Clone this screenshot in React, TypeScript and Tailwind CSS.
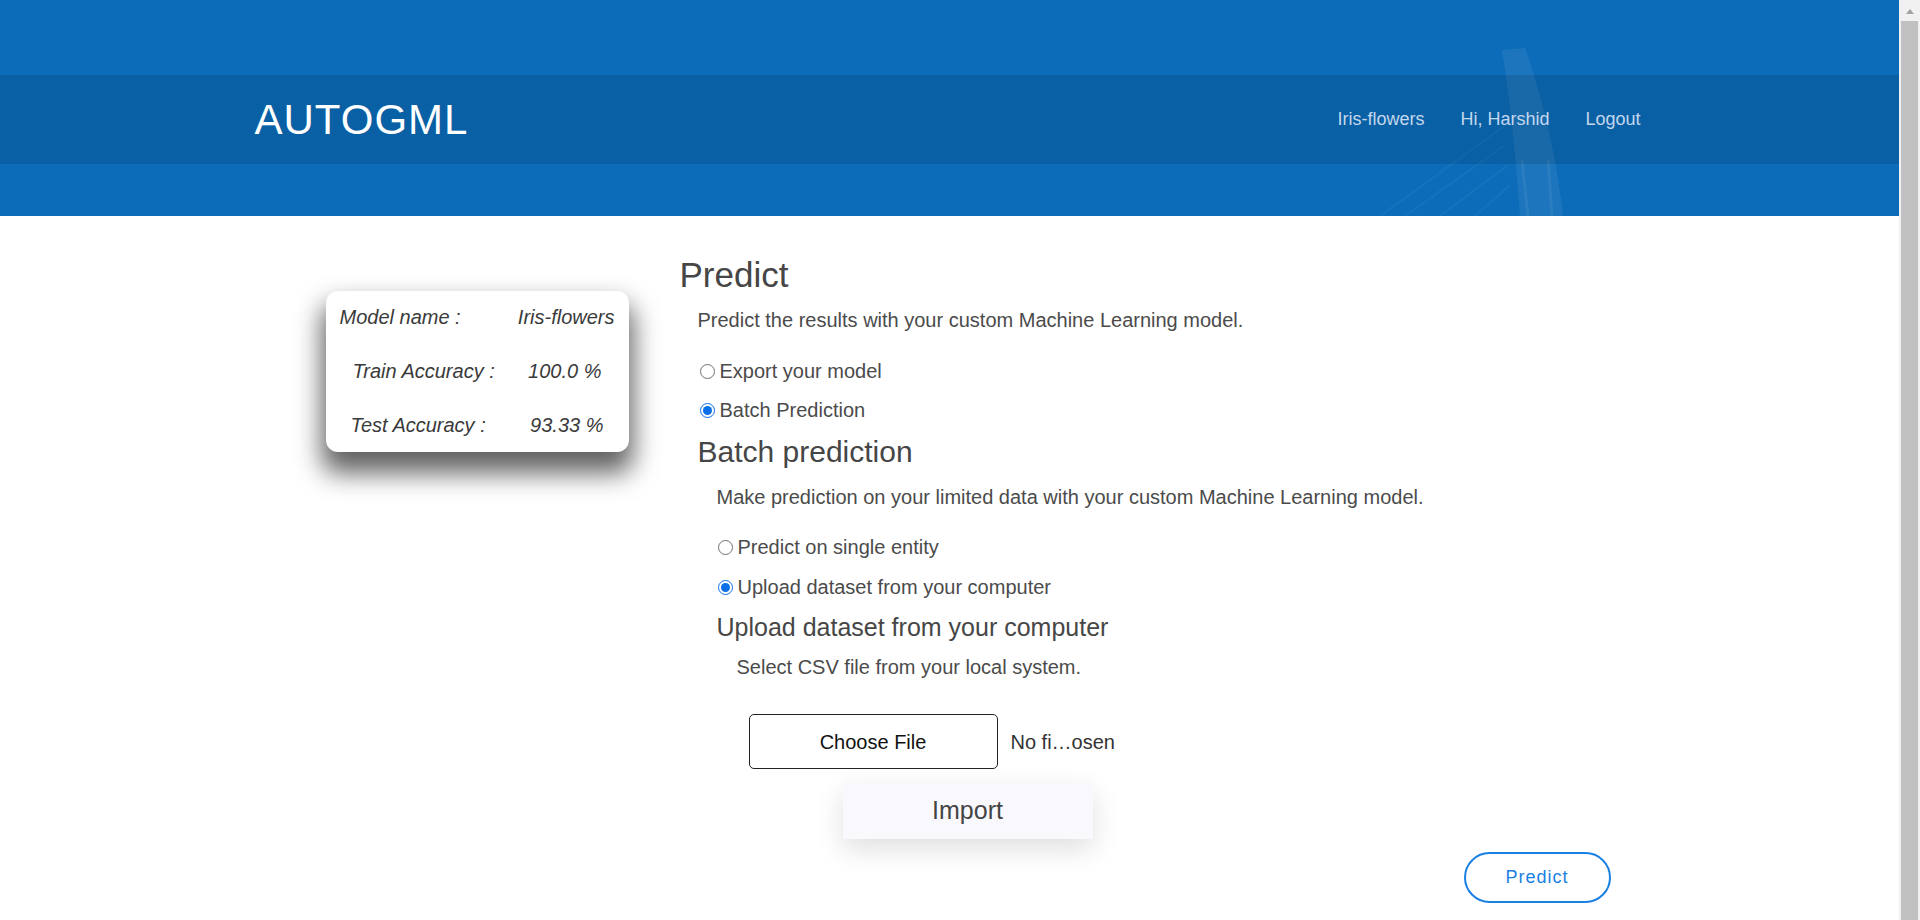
import React from "react";

function Radio({ checked }: { checked?: boolean }) {
  return checked ? (
    <span className="flex h-[15px] w-[15px] shrink-0 items-center justify-center rounded-full border-[1.5px] border-[#0b6fe8] bg-white">
      <span className="h-[9px] w-[9px] rounded-full bg-[#0b6fe8]" />
    </span>
  ) : (
    <span className="h-[15px] w-[15px] shrink-0 rounded-full border border-[#6f6f6f] bg-white" />
  );
}

function RadioRow({ checked, label, className }: { checked?: boolean; label: string; className: string }) {
  return (
    <div className={"flex items-center gap-[5px] text-[20px] leading-[30px] text-[#4b4b4b] " + className}>
      <Radio checked={checked} />
      <span>{label}</span>
    </div>
  );
}

export default function App() {
  return (
    <div className="flex h-[920px] w-full overflow-hidden bg-white font-['Liberation_Sans',Arial,sans-serif]">
      <div className="h-full flex-1 overflow-hidden">
        <header className="relative h-[216px] overflow-hidden bg-[#0c6cb9]">
          <svg className="absolute left-0 top-0" width="1899" height="216" viewBox="0 0 1899 216">
            <g fill="none" stroke="rgba(255,255,255,0.045)" strokeWidth="2">
              <path d="M1505 145 L1405 216" />
              <path d="M1508 165 L1440 216" />
              <path d="M1510 185 L1475 216" />
              <path d="M1506 125 L1380 216" />
            </g>
            <path d="M1502 50 L1525 48 C1540 90 1556 150 1563 216 L1520 216 C1516 160 1510 100 1502 50 Z" fill="rgba(255,255,255,0.07)" />
            <path d="M1522 160 L1528 216 M1548 160 L1552 216" stroke="rgba(255,255,255,0.06)" strokeWidth="3" />
          </svg>
          <div className="relative pt-[75px]">
            <div className="h-[89px] bg-[rgba(0,0,0,0.11)]">
              <div className="mx-auto flex h-full w-[1390px] items-center justify-between pr-[4px]">
                <div className="text-[42px] leading-none tracking-[1px] text-white">AUTOGML</div>
                <nav className="-mt-[2px] flex gap-[36px] text-[18px] leading-none text-[#c3d7ee]">
                  <span>Iris-flowers</span>
                  <span>Hi, Harshid</span>
                  <span>Logout</span>
                </nav>
              </div>
            </div>
          </div>
        </header>

        <main className="mx-auto flex w-[1390px]">
          <div className="w-[425px] shrink-0 pl-[71px] pt-[75px]">
            <div className="flex w-[303px] flex-col gap-[31px] rounded-[12px] bg-white py-[15px] text-[20px] italic leading-[23px] text-[#3a3a3a] shadow-[0_17px_26px_4px_rgba(0,0,0,0.62)]">
              <div className="flex justify-between px-[14px]">
                <span>Model name :</span>
                <span>Iris-flowers</span>
              </div>
              <div className="flex justify-between px-[27px]">
                <span>Train Accuracy :</span>
                <span>100.0 %</span>
              </div>
              <div className="flex justify-between px-[25px]">
                <span>Test Accuracy :</span>
                <span>93.33 %</span>
              </div>
            </div>
          </div>

          <section className="flex-1 pt-[38px] text-[#4b4b4b]">
            <h3 className="text-[35px] leading-[42px] text-[#464646]">Predict</h3>
            <div className="pl-[18px]">
              <p className="mt-[9px] text-[20px] leading-[30px]">Predict the results with your custom Machine Learning model.</p>
              <RadioRow label="Export your model" className="ml-[2px] mt-[21px]" />
              <RadioRow checked label="Batch Prediction" className="ml-[2px] mt-[9px]" />
              <h4 className="mt-[9px] text-[30px] leading-[36px] text-[#464646]">Batch prediction</h4>
              <div className="pl-[19px]">
                <p className="mt-[12px] text-[20px] leading-[30px]">Make prediction on your limited data with your custom Machine Learning model.</p>
                <RadioRow label="Predict on single entity" className="ml-[1px] mt-[20px]" />
                <RadioRow checked label="Upload dataset from your computer" className="ml-[1px] mt-[10px]" />
                <h5 className="mt-[10px] text-[25px] leading-[30px] text-[#464646]">Upload dataset from your computer</h5>
                <div className="pl-[20px]">
                  <p className="mt-[10px] text-[20px] leading-[30px]">Select CSV file from your local system.</p>
                  <div className="ml-[12px] mt-[32px] flex items-center gap-[13px]">
                    <div className="flex h-[55px] w-[249px] items-center justify-center rounded-[5px] border border-[#222] bg-white text-[20px] text-[#111]">
                      Choose File
                    </div>
                    <span className="text-[20px] text-[#333]">No fi…osen</span>
                  </div>
                  <div className="ml-[106px] mt-[14px] flex h-[56px] w-[250px] items-center justify-center bg-[#f8f8fd] text-[25px] text-[#444] shadow-[0_10px_28px_rgba(0,0,0,0.13)]">
                    Import
                  </div>
                </div>
              </div>
            </div>
            <div className="ml-[784px] mt-[13px] flex h-[51px] w-[147px] items-center justify-center rounded-full border-2 border-[#1a80e2] text-[18px] tracking-[1px] text-[#1a80e2]">
              Predict
            </div>
          </section>
        </main>
      </div>
      <div className="flex h-full w-[21px] shrink-0 flex-col bg-[#f1f1f1]">
        <div className="flex h-[21px] items-start justify-center pt-[9px]">
          <div className="h-0 w-0 border-x-[4.5px] border-b-[5px] border-x-transparent border-b-[#a3a3a3]" />
        </div>
        <div className="mx-[2px] flex-1 bg-[#c1c1c1]" />
      </div>
    </div>
  );
}
